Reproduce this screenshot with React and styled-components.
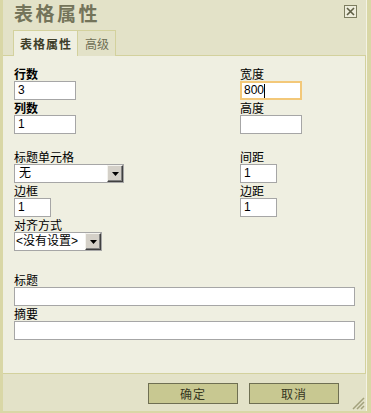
import React from "react";
import styled, { createGlobalStyle } from "styled-components";

const GlobalStyle = createGlobalStyle`
  html, body { margin: 0; padding: 0; background: #ffffff; }
  body { font-family: "Noto Sans CJK SC", sans-serif; }
  * { box-sizing: border-box; }
`;

const Frame = styled.div`
  width: 371px;
  height: 413px;
  background: #d9d7a6;
  padding: 0 4px 2px 3px;
  display: flex;
`;

const Panel = styled.div`
  position: relative;
  flex: 1;
  display: flex;
  flex-direction: column;
  background: #e3e2c8;
  border-right: 1px solid #f4f3e4;
`;

const TitleBar = styled.div`
  height: 30px;
  display: flex;
  align-items: flex-start;
  justify-content: space-between;
  padding: 0 9px 0 11px;
`;

const Title = styled.div`
  margin-top: 1px;
  font-size: 19px;
  line-height: 24px;
  font-weight: 700;
  letter-spacing: 2.5px;
  color: #74745a;
`;

const CloseButton = styled.div`
  margin-top: 5px;
  width: 13px;
  height: 13px;
  display: flex;
`;

const TabBar = styled.div`
  display: flex;
  padding-left: 10px;
  height: 26px;
  border-bottom: 1px solid #d3d19d;
`;

const Tab = styled.div`
  height: 26px;
  margin-bottom: -1px;
  font-size: 12px;
  line-height: 25px;
  white-space: nowrap;
  border-top: 1px solid #d3d19d;
  border-right: 1px solid #d3d19d;
  border-left: ${(p) => (p.$active ? "1px solid #d3d19d" : "none")};
  background: ${(p) => (p.$active ? "#efefe1" : "#e3e2c8")};
  color: ${(p) => (p.$active ? "#3e3e2a" : "#6e6e55")};
  font-weight: ${(p) => (p.$active ? 700 : 400)};
  letter-spacing: ${(p) => (p.$active ? "1px" : "0")};
  width: ${(p) => p.$w}px;
  padding-left: ${(p) => (p.$active ? 6 : 7)}px;
`;

const Content = styled.div`
  flex: 1;
  background: #efefe1;
  border-right: 1px solid #d3d19d;
  border-bottom: 1px solid #d3d19d;
  padding: 10px 10px 0 11px;
  display: flex;
  flex-direction: column;
`;

const Section = styled.div`
  display: grid;
  grid-template-columns: ${(p) => (p.$full ? "1fr" : "226px 1fr")};
  margin-top: ${(p) => p.$gap || 0}px;
`;

const Column = styled.div`
  display: flex;
  flex-direction: column;
`;

const Field = styled.div`
  display: flex;
  flex-direction: column;
  align-items: flex-start;
`;

const Label = styled.div`
  font-size: 12px;
  line-height: 15px;
  height: 15px;
  color: #000;
  font-weight: ${(p) => (p.$bold ? 700 : 400)};
  white-space: nowrap;
`;

const TextBox = styled.div`
  width: ${(p) => (p.$w ? `${p.$w}px` : "100%")};
  height: 19px;
  background: #fff;
  border: ${(p) => (p.$focus ? "2px solid #f3c879" : "1px solid #a6a6a6")};
  font-family: "Liberation Sans", "Noto Sans CJK SC", sans-serif;
  font-size: 12px;
  line-height: ${(p) => (p.$focus ? 15 : 17)}px;
  padding-left: ${(p) => (p.$focus ? 2 : 3)}px;
  color: #000;
  display: flex;
  align-items: center;
`;

const Caret = styled.span`
  display: inline-block;
  width: 1px;
  height: 14px;
  background: #000;
`;

const SelectBox = styled.div`
  width: ${(p) => p.$w}px;
  height: 19px;
  background: #fff;
  border: 1px solid #a6a6a6;
  display: flex;
  align-items: stretch;
`;

const SelectText = styled.div`
  flex: 1;
  font-family: "Liberation Sans", "Noto Sans CJK SC", sans-serif;
  font-size: 12px;
  line-height: 17px;
  padding-left: ${(p) => p.$pad}px;
  color: #000;
  white-space: nowrap;
  overflow: hidden;
`;

const DropButton = styled.div`
  width: 16px;
  background: #d4d0c8;
  border-top: 1px solid #f4f3ee;
  border-left: 1px solid #f4f3ee;
  border-right: 1px solid #404040;
  border-bottom: 1px solid #404040;
  box-shadow: inset -1px -1px 0 #808080;
  display: flex;
  align-items: center;
  justify-content: center;
`;

const Footer = styled.div`
  height: 37px;
  background: #e3e2c8;
  display: flex;
  justify-content: flex-end;
  align-items: flex-start;
  gap: 11px;
  padding: 9px 27px 0 0;
`;

const Button = styled.div`
  width: 90px;
  height: 21px;
  background: #c8c891;
  border: 1px solid #6f6f52;
  color: #36361f;
  font-size: 12px;
  line-height: 19px;
  text-align: center;
  letter-spacing: 1px;
`;

const Grip = styled.svg`
  position: absolute;
  right: 1px;
  bottom: 1px;
`;

const Arrow = () => (
  <svg width="7" height="4" viewBox="0 0 7 4">
    <path d="M0 0H7L3.5 4Z" fill="#000" />
  </svg>
);

const Select = ({ w, pad, value }) => (
  <SelectBox $w={w}>
    <SelectText $pad={pad}>{value}</SelectText>
    <DropButton>
      <Arrow />
    </DropButton>
  </SelectBox>
);

export default function App() {
  return (
    <>
      <GlobalStyle />
      <Frame>
        <Panel>
          <TitleBar>
            <Title>表格属性</Title>
            <CloseButton>
              <svg width="13" height="13" viewBox="0 0 13 13">
                <rect x="0.5" y="0.5" width="12" height="12" fill="#eeeddc" stroke="#7d7d60" />
                <path d="M3 3L10 10M10 3L3 10" stroke="#5f5f45" strokeWidth="1.6" />
              </svg>
            </CloseButton>
          </TitleBar>
          <TabBar>
            <Tab $active $w={65}>表格属性</Tab>
            <Tab $w={38}>高级</Tab>
          </TabBar>
          <Content>
            <Section>
              <Column>
                <Field>
                  <Label $bold>行数</Label>
                  <TextBox $w={62}>3</TextBox>
                </Field>
                <Field>
                  <Label $bold>列数</Label>
                  <TextBox $w={62}>1</TextBox>
                </Field>
              </Column>
              <Column>
                <Field>
                  <Label>宽度</Label>
                  <TextBox $w={62} $focus>
                    800<Caret />
                  </TextBox>
                </Field>
                <Field>
                  <Label>高度</Label>
                  <TextBox $w={62} />
                </Field>
              </Column>
            </Section>
            <Section $gap={15}>
              <Column>
                <Field>
                  <Label>标题单元格</Label>
                  <Select w={110} pad={4} value="无" />
                </Field>
                <Field>
                  <Label>边框</Label>
                  <TextBox $w={37}>1</TextBox>
                </Field>
                <Field>
                  <Label>对齐方式</Label>
                  <Select w={88} pad={1} value="<没有设置>" />
                </Field>
              </Column>
              <Column>
                <Field>
                  <Label>间距</Label>
                  <TextBox $w={37}>1</TextBox>
                </Field>
                <Field>
                  <Label>边距</Label>
                  <TextBox $w={37}>1</TextBox>
                </Field>
              </Column>
            </Section>
            <Section $full $gap={21}>
              <Field>
                <Label>标题</Label>
                <TextBox />
              </Field>
              <Field>
                <Label>摘要</Label>
                <TextBox />
              </Field>
            </Section>
          </Content>
          <Footer>
            <Button>确定</Button>
            <Button>取消</Button>
          </Footer>
          <Grip width="13" height="13" viewBox="0 0 13 13">
            <path d="M12 1L1 12M12 5L5 12M12 9L9 12" stroke="#a3a27c" strokeWidth="1.5" />
          </Grip>
        </Panel>
      </Frame>
    </>
  );
}
